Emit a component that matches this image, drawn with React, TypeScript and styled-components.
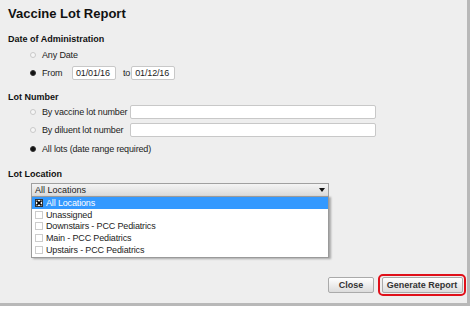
import styled, { createGlobalStyle } from "styled-components";

const GlobalStyle = createGlobalStyle`
  html, body {
    margin: 0;
    padding: 0;
    background: #ffffff;
  }
  body {
    font-family: "Liberation Sans", Arial, sans-serif;
    color: #1c1c1c;
  }
`;

const Panel = styled.div`
  width: 470px;
  height: 306px;
  box-sizing: border-box;
  background: #eeeeee;
  border-right: 3px solid #b8b8b8;
  border-bottom: 3px solid #b8b8b8;
  padding: 5px 0 0 8px;
  display: flex;
  flex-direction: column;
`;

const Title = styled.h1`
  margin: 0;
  font-size: 13px;
  font-weight: bold;
  line-height: 18px;
  color: #111;
`;

const Section = styled.div<{ $top: number }>`
  margin-top: ${(p) => p.$top}px;
  display: flex;
  flex-direction: column;
`;

const Heading = styled.div`
  font-size: 9px;
  font-weight: bold;
  line-height: 12px;
  color: #111;
`;

const Options = styled.div<{ $gap: number; $pad: number }>`
  display: flex;
  flex-direction: column;
  padding-left: 22px;
  padding-top: ${(p) => p.$pad}px;
  gap: ${(p) => p.$gap}px;
`;

const Row = styled.div`
  display: flex;
  align-items: center;
  height: 15px;
  font-size: 9px;
  letter-spacing: -0.15px;
`;

const Radio = styled.span<{ $on?: boolean }>`
  width: 6px;
  height: 6px;
  border-radius: 50%;
  box-sizing: border-box;
  border: 1px solid ${(p) => (p.$on ? "#333" : "#c9c9c9")};
  background: ${(p) => (p.$on ? "#111" : "#f6f6f6")};
  margin-right: 6px;
  flex-shrink: 0;
`;

const Label = styled.span<{ $w?: number }>`
  width: ${(p) => (p.$w ? `${p.$w}px` : "auto")};
  white-space: nowrap;
`;

const TextBox = styled.div<{ $w: number }>`
  width: ${(p) => p.$w}px;
  height: 14px;
  box-sizing: border-box;
  background: #ffffff;
  border: 1px solid #c8c8c8;
  border-radius: 2px;
  font-size: 9px;
  line-height: 12px;
  padding-left: 3px;
`;

const Between = styled.span`
  margin: 0 1px 0 7px;
`;

const SelectWrap = styled.div`
  margin-left: 23px;
  margin-top: 3px;
  position: relative;
  width: 298px;
`;

const Select = styled.div`
  height: 14px;
  box-sizing: border-box;
  border: 1px solid #a0a0a0;
  background: linear-gradient(#f4f4f4, #dadada);
  font-size: 9px;
  line-height: 12px;
  padding-left: 3px;
  display: flex;
  justify-content: space-between;
  align-items: center;
`;

const Arrow = styled.span`
  width: 0;
  height: 0;
  border-left: 3px solid transparent;
  border-right: 3px solid transparent;
  border-top: 4px solid #111;
  margin-right: 3px;
`;

const List = styled.div`
  position: absolute;
  top: 13px;
  left: 0;
  width: 298px;
  box-sizing: border-box;
  background: #ffffff;
  border: 1px solid #9a9a9a;
  box-shadow: 2px 1px 2px rgba(0, 0, 0, 0.3);
  padding: 0 0 2px;
  z-index: 2;
`;

const Item = styled.div<{ $sel?: boolean }>`
  height: 11.7px;
  display: flex;
  align-items: center;
  font-size: 9px;
  letter-spacing: -0.15px;
  padding-left: 3px;
  background: ${(p) => (p.$sel ? "#3399ff" : "transparent")};
  color: ${(p) => (p.$sel ? "#ffffff" : "#1c1c1c")};
`;

const Check = styled.span<{ $on?: boolean }>`
  width: 8px;
  height: 8px;
  box-sizing: border-box;
  border: 1px solid ${(p) => (p.$on ? "#333" : "#cccccc")};
  background: #ffffff;
  margin-right: 3px;
  display: flex;
  align-items: center;
  justify-content: center;
  flex-shrink: 0;
`;

const Footer = styled.div`
  margin-top: auto;
  margin-bottom: 7px;
  display: flex;
  justify-content: flex-end;
  align-items: center;
  gap: 4px;
  padding-right: 1px;
`;

const Button = styled.button<{ $w: number }>`
  width: ${(p) => p.$w}px;
  height: 16px;
  box-sizing: border-box;
  border: 1px solid #aaaaaa;
  border-radius: 2px;
  background: linear-gradient(#ffffff, #dcdcdc);
  font-family: "Liberation Sans", Arial, sans-serif;
  font-size: 9px;
  font-weight: bold;
  color: #333;
  padding: 0;
`;

const Highlight = styled.div`
  border: 2px solid #e0101a;
  border-radius: 5px;
  padding: 1px 1.5px;
  display: flex;
`;

const locations = [
  "All Locations",
  "Unassigned",
  "Downstairs - PCC Pediatrics",
  "Main - PCC Pediatrics",
  "Upstairs - PCC Pediatrics",
];

export default function App() {
  return (
    <>
      <GlobalStyle />
      <Panel>
        <Title>Vaccine Lot Report</Title>
        <Section $top={10}>
          <Heading>Date of Administration</Heading>
          <Options $gap={3} $pad={2}>
            <Row>
              <Radio />
              <Label>Any Date</Label>
            </Row>
            <Row>
              <Radio $on />
              <Label $w={30}>From</Label>
              <TextBox $w={44}>01/01/16</TextBox>
              <Between>to</Between>
              <TextBox $w={44}>01/12/16</TextBox>
            </Row>
          </Options>
        </Section>
        <Section $top={11}>
          <Heading>Lot Number</Heading>
          <Options $gap={3.5} $pad={1}>
            <Row>
              <Radio />
              <Label $w={88}>By vaccine lot number</Label>
              <TextBox $w={246} />
            </Row>
            <Row>
              <Radio />
              <Label $w={88}>By diluent lot number</Label>
              <TextBox $w={246} />
            </Row>
            <Row>
              <Radio $on />
              <Label>All lots (date range required)</Label>
            </Row>
          </Options>
        </Section>
        <Section $top={12}>
          <Heading>Lot Location</Heading>
          <SelectWrap>
            <Select>
              All Locations
              <Arrow />
            </Select>
            <List>
              {locations.map((name, i) => (
                <Item key={name} $sel={i === 0}>
                  <Check $on={i === 0}>
                    {i === 0 && (
                      <svg width="6" height="6" viewBox="0 0 6 6">
                        <path d="M0.5 0.5 L5.5 5.5 M5.5 0.5 L0.5 5.5" stroke="#000" strokeWidth="1.6" />
                      </svg>
                    )}
                  </Check>
                  {name}
                </Item>
              ))}
            </List>
          </SelectWrap>
        </Section>
        <Footer>
          <Button $w={46}>Close</Button>
          <Highlight>
            <Button $w={81}>Generate Report</Button>
          </Highlight>
        </Footer>
      </Panel>
    </>
  );
}
